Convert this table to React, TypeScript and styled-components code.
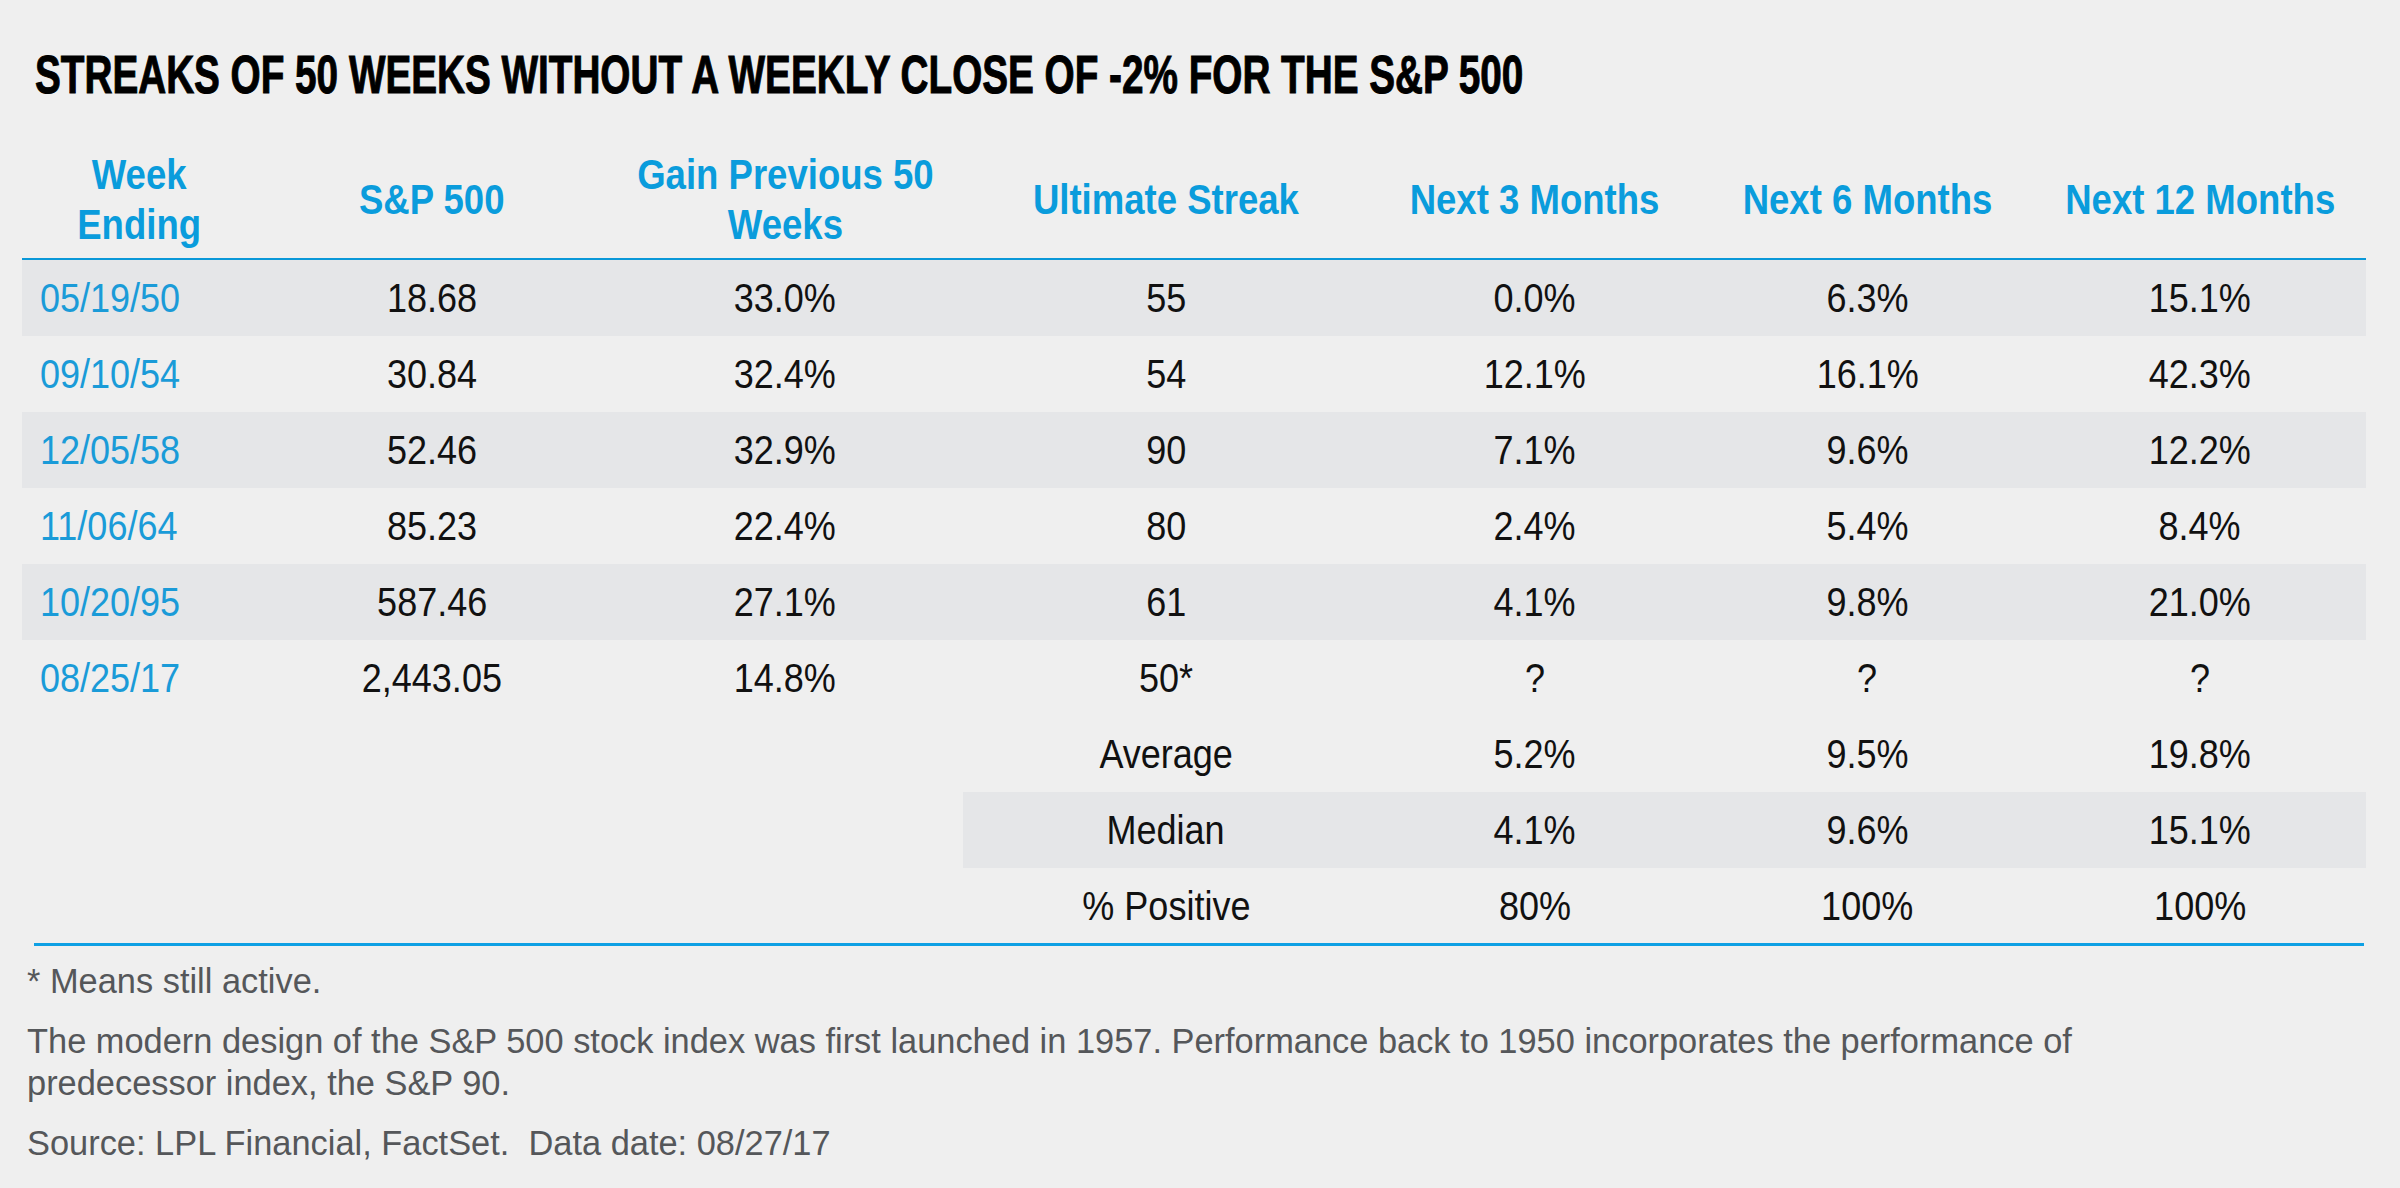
import React from 'react';
import styled, { createGlobalStyle } from 'styled-components';

const GlobalStyle = createGlobalStyle`
  html, body {
    margin: 0;
    padding: 0;
    background: #efefef;
  }
  body {
    font-family: 'Liberation Sans', Arial, sans-serif;
  }
`;

const Page = styled.div`
  width: 2400px;
  height: 1188px;
  box-sizing: border-box;
  padding: 48px 0 0 22px;
  background: #efefef;
  overflow: hidden;
`;

const Title = styled.h1`
  margin: 0 0 41px 13px;
  font-size: 53px;
  line-height: 53px;
  font-weight: 700;
  color: #000;
  -webkit-text-stroke: 1px #000;
`;

// the reference is set in a condensed face, so squeeze the text horizontally
const Squeeze = styled.span<{ $scale: number; $origin?: string }>`
  display: inline-block;
  white-space: nowrap;
  transform: scaleX(${p => p.$scale});
  transform-origin: ${p => p.$origin ?? 'center'};
`;

const Table = styled.table`
  width: 2344px;
  table-layout: fixed;
  border-collapse: separate;
  border-spacing: 0;
`;

const HeadCell = styled.th`
  box-sizing: border-box;
  height: 118px;
  padding: 0;
  border-bottom: 2px solid #0a98d8;
  color: #0a9cdc;
  font-size: 42px;
  line-height: 50px;
  font-weight: 700;
  text-align: center;
  vertical-align: middle;
`;

const Cell = styled.td<{ $shade?: boolean; $date?: boolean }>`
  box-sizing: border-box;
  height: 76px;
  padding: 0 0 0 ${p => (p.$date ? '18px' : '0')};
  background: ${p => (p.$shade ? '#e5e6e8' : 'transparent')};
  color: ${p => (p.$date ? '#1a9bd8' : '#111')};
  font-size: 40px;
  line-height: 48px;
  text-align: ${p => (p.$date ? 'left' : 'center')};
  vertical-align: middle;
`;

const Rule = styled.div`
  width: 2330px;
  height: 3px;
  margin: -1px 0 0 12px;
  background: #0ea0e4;
`;

const Notes = styled.div`
  display: flex;
  flex-direction: column;
  gap: 18px;
  margin-top: 14px;
  padding-left: 5px;
`;

const Note = styled.p`
  margin: 0;
  font-size: 34.4px;
  line-height: 42px;
  color: #55575a;
`;

const columns = [235, 350, 356, 406, 332, 333, 332];

const headers: React.ReactNode[] = [
  <>Week<br />Ending</>,
  'S&P 500',
  <>Gain Previous 50<br />Weeks</>,
  'Ultimate Streak',
  'Next 3 Months',
  'Next 6 Months',
  'Next 12 Months',
];

const rows = [
  ['05/19/50', '18.68', '33.0%', '55', '0.0%', '6.3%', '15.1%'],
  ['09/10/54', '30.84', '32.4%', '54', '12.1%', '16.1%', '42.3%'],
  ['12/05/58', '52.46', '32.9%', '90', '7.1%', '9.6%', '12.2%'],
  ['11/06/64', '85.23', '22.4%', '80', '2.4%', '5.4%', '8.4%'],
  ['10/20/95', '587.46', '27.1%', '61', '4.1%', '9.8%', '21.0%'],
  ['08/25/17', '2,443.05', '14.8%', '50*', '?', '?', '?'],
];

const summary = [
  { cells: ['Average', '5.2%', '9.5%', '19.8%'], shade: false },
  { cells: ['Median', '4.1%', '9.6%', '15.1%'], shade: true },
  { cells: ['% Positive', '80%', '100%', '100%'], shade: false },
];

const TEXT_SCALE = 0.9;
const HEAD_SCALE = 0.87;

export default function App() {
  return (
    <>
      <GlobalStyle />
      <Page>
        <Title>
          <Squeeze $scale={0.73} $origin="left">
            STREAKS OF 50 WEEKS WITHOUT A WEEKLY CLOSE OF -2% FOR THE S&amp;P 500
          </Squeeze>
        </Title>

        <Table>
          <colgroup>
            {columns.map((w, i) => (
              <col key={i} style={{ width: w }} />
            ))}
          </colgroup>
          <thead>
            <tr>
              {headers.map((h, i) => (
                <HeadCell key={i}>
                  <Squeeze $scale={HEAD_SCALE}>{h}</Squeeze>
                </HeadCell>
              ))}
            </tr>
          </thead>
          <tbody>
            {rows.map((row, r) => (
              <tr key={row[0]}>
                {row.map((value, c) => (
                  <Cell key={c} $shade={r % 2 === 0} $date={c === 0}>
                    <Squeeze $scale={TEXT_SCALE} $origin={c === 0 ? 'left' : 'center'}>
                      {value}
                    </Squeeze>
                  </Cell>
                ))}
              </tr>
            ))}
            {summary.map(s => (
              <tr key={s.cells[0]}>
                <Cell colSpan={3} />
                {s.cells.map((value, c) => (
                  <Cell key={c} $shade={s.shade}>
                    <Squeeze $scale={TEXT_SCALE}>{value}</Squeeze>
                  </Cell>
                ))}
              </tr>
            ))}
          </tbody>
        </Table>

        <Rule />

        <Notes>
          <Note>* Means still active.</Note>
          <Note>
            The modern design of the S&amp;P 500 stock index was first launched in 1957. Performance back to 1950
            incorporates the performance of
            <br />
            predecessor index, the S&amp;P 90.
          </Note>
          <Note>Source: LPL Financial, FactSet.&nbsp; Data date: 08/27/17</Note>
        </Notes>
      </Page>
    </>
  );
}
